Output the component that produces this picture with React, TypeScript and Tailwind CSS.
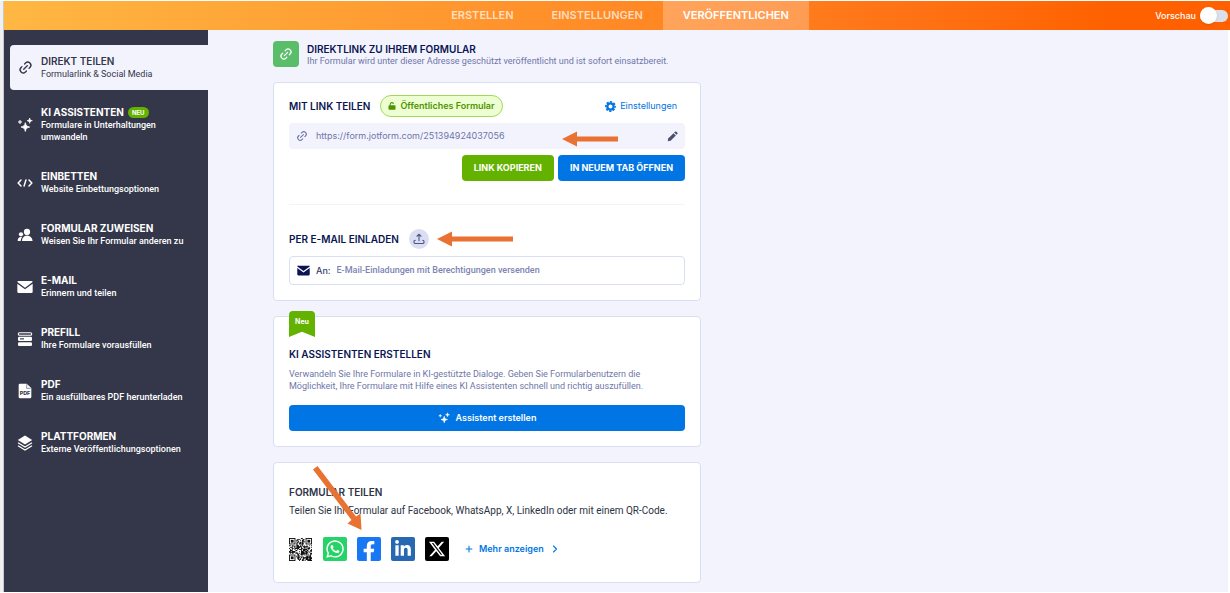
import type { ReactNode } from 'react';
import { Link2, Plus, ChevronRight } from 'lucide-react';
import { FaXTwitter } from 'react-icons/fa6';
import { FaWhatsapp, FaFacebookF, FaLinkedinIn } from 'react-icons/fa';

function LinkIcon({ className }: { className: string }) {
  return <Link2 className={`-rotate-45 ${className}`} strokeWidth={2.2} aria-hidden="true" />;
}

function SparkleIcon({ className }: { className: string }) {
  return (
    <svg viewBox="0 0 24 24" className={className} fill="currentColor" aria-hidden="true">
      <path d="M12.5 8.5c.9 4.3 2.2 5.7 6.5 6.6-4.3.9-5.6 2.2-6.5 6.6-.9-4.4-2.2-5.7-6.5-6.6 4.300-.9 5.600-2.300 6.500-6.600z" stroke="currentColor" strokeWidth="1.200" />
      <path d="M19 1.500c.5 2.700 1.300 3.500 4 4-2.700.5-3.500 1.300-4 4-.5-2.700-1.300-3.500-4-4 2.700-.5 3.500-1.300 4-4z" stroke="currentColor" />
      <path d="M4.500 4.500c.4 2 1 2.600 3 3-2 .4-2.600 1-3 3-.4-2-1-2.600-3-3 2-.4 2.600-1 3-3z" stroke="currentColor" strokeWidth=".8" />
    </svg>
  );
}

function CodeIcon() {
  return (
    <svg viewBox="0 0 24 24" className="size-4" fill="none" stroke="currentColor" strokeWidth="2.2" strokeLinecap="round" strokeLinejoin="round" aria-hidden="true">
      <path d="M6 7.500 1.700 12 6 16.500M18 7.500l4.300 4.500-4.300 4.500M13.400 7.500l-2.800 9" />
    </svg>
  );
}

function PeopleIcon() {
  return (
    <svg viewBox="0 0 24 24" className="size-4" fill="currentColor" aria-hidden="true">
      <circle cx="15" cy="7.500" r="4.700" />
      <path d="M7.500 21c0-5 3-8 7.500-8s8.300 3 8.300 8z" />
      <circle cx="6" cy="11" r="3.200" />
      <path d="M1 21c0-3.600 1.800-6 4.800-6 .7 0 1.300.1 1.900.3C6.300 17 5.700 18.800 5.600 21z" />
    </svg>
  );
}

function EnvelopeIcon({ className }: { className: string }) {
  return (
    <svg viewBox="0 0 24 24" className={className} fill="currentColor" aria-hidden="true">
      <path d="M2.500 3h19A1.800 1.800 0 0 1 23.500 4.600L12 13 .5 4.600A1.800 1.800 0 0 1 2.500 3z" />
      <path d="M.5 7.300 12 15.500l11.500-8.200V19a2 2 0 0 1-2 2h-19a2 2 0 0 1-2-2z" />
    </svg>
  );
}

function PrefillIcon() {
  return (
    <svg viewBox="0 0 24 24" className="size-4" aria-hidden="true">
      <rect x="2" y="2.500" width="20" height="4" rx="1.500" fill="none" stroke="currentColor" strokeWidth="1.600" />
      <rect x="1.500" y="8.500" width="21" height="6.500" rx="1.800" fill="currentColor" />
      <path d="M4.500 11.800h6" stroke="#343749" strokeWidth="1.700" />
      <rect x="1.500" y="17" width="21" height="5.500" rx="1.800" fill="currentColor" />
    </svg>
  );
}

function PdfIcon() {
  return (
    <svg viewBox="0 0 24 24" className="size-4" aria-hidden="true">
      <path d="M4.500 1h10l7 6.500V21a2 2 0 0 1-2 2h-15a2 2 0 0 1-2-2V3a2 2 0 0 1 2-2z" fill="currentColor" />
      <path d="M14.500 2v6h6" fill="none" stroke="#343749" strokeWidth=".8" />
      <text x="12" y="18.500" textAnchor="middle" fontSize="8" fontWeight="800" fill="#343749">PDF</text>
    </svg>
  );
}

function LayersIcon() {
  return (
    <svg viewBox="0 0 24 24" className="size-4" fill="currentColor" aria-hidden="true">
      <path d="M12 .8 22.800 7.500 12 14.200 1.200 7.500z" />
      <path d="m1.500 11.700 10.500 6.400 10.500-6.400M1.500 16.200 12 22.600l10.500-6.400" fill="none" stroke="currentColor" strokeWidth="1.900" />
    </svg>
  );
}

function LockIcon() {
  return (
    <svg viewBox="0 0 16 16" className="size-2" aria-hidden="true">
      <rect x="1" y="6.500" width="14" height="9" rx="1.500" fill="currentColor" />
      <path d="M4.500 7V4.500a3.300 3.300 0 0 1 6.500-.8" fill="none" stroke="currentColor" strokeWidth="2.200" />
    </svg>
  );
}

function GearIcon() {
  return (
    <svg viewBox="0 0 24 24" className="size-[11px]" aria-hidden="true">
      <circle cx="12" cy="12" r="6.900" fill="none" stroke="currentColor" strokeWidth="5" />
      <circle cx="12" cy="12" r="10.200" fill="none" stroke="currentColor" strokeWidth="3.400" strokeDasharray="4.900 3.110" strokeDashoffset="2.450" />
    </svg>
  );
}

function PencilIcon() {
  return (
    <svg viewBox="0 0 24 24" className="size-[11px]" fill="currentColor" aria-hidden="true">
      <path d="M1.500 22.500 3 16 14.300 4.700l5 5L8 21z" />
      <path d="m15.600 3.400 1.700-1.700a2.400 2.400 0 0 1 3.400 0l1.600 1.600a2.400 2.400 0 0 1 0 3.400l-1.700 1.700z" />
    </svg>
  );
}

function UploadIcon() {
  return (
    <svg viewBox="0 0 24 24" className="size-3" fill="none" stroke="currentColor" strokeWidth="2.200" strokeLinecap="round" strokeLinejoin="round" aria-hidden="true">
      <path d="M12 15.500V3M8 6.500 12 2.500l4 4M4.500 14.500C3 14.500 2 15.500 2 17v1.500A2.500 2.500 0 0 0 4.500 21h15a2.500 2.500 0 0 0 2.500-2.500V17c0-1.500-1-2.500-2.500-2.500" />
    </svg>
  );
}

const QR_SIZE = 25;

function qrCells() {
  const cells: string[] = [];
  const inFinder = (x: number, y: number) =>
    (x < 8 && y < 8) || (x > QR_SIZE - 9 && y < 8) || (x < 8 && y > QR_SIZE - 9);
  let seed = 77;
  for (let y = 0; y < QR_SIZE; y++) {
    for (let x = 0; x < QR_SIZE; x++) {
      seed = (seed * 1103515245 + 12345) % 2147483648;
      if (!inFinder(x, y) && (seed >> 12) % 100 < 60) cells.push(`M${x} ${y}h1v1h-1z`);
    }
  }
  return cells.join('');
}

const QR_PATH = qrCells();

function QrIcon() {
  return (
    <svg viewBox="0 0 25 25" className="size-[23px]" aria-hidden="true">
      <path d={QR_PATH} fill="#111" />
      {[[0, 0], [18, 0], [0, 18]].map(([x, y]) => (
        <g key={`${x}-${y}`}>
          <rect x={x + 0.5} y={y + 0.5} width="6" height="6" fill="none" stroke="#111" />
          <rect x={x + 2} y={y + 2} width="3" height="3" fill="#111" />
        </g>
      ))}
    </svg>
  );
}

function LeftArrow({ length, className }: { length: number; className: string }) {
  return (
    <svg viewBox={`0 0 ${length} 16`} width={length} height="16" className={className} fill="#e97132" aria-hidden="true">
      <path d={`M0 8 15 .5v5H${length}v5H15v5z`} />
    </svg>
  );
}

type NavItem = { title: string; text: string; icon: ReactNode; isNew?: boolean };

const navItems: NavItem[] = [
  { title: 'KI ASSISTENTEN', text: 'Formulare in Unterhaltungen umwandeln', icon: <SparkleIcon className="size-4" />, isNew: true },
  { title: 'EINBETTEN', text: 'Website Einbettungsoptionen', icon: <CodeIcon /> },
  { title: 'FORMULAR ZUWEISEN', text: 'Weisen Sie Ihr Formular anderen zu', icon: <PeopleIcon /> },
  { title: 'E-MAIL', text: 'Erinnern und teilen', icon: <EnvelopeIcon className="size-4" /> },
  { title: 'PREFILL', text: 'Ihre Formulare vorausfüllen', icon: <PrefillIcon /> },
  { title: 'PDF', text: 'Ein ausfüllbares PDF herunterladen', icon: <PdfIcon /> },
  { title: 'PLATTFORMEN', text: 'Externe Veröffentlichungsoptionen', icon: <LayersIcon /> },
];

function Header() {
  return (
    <header className="relative flex h-[29px] items-stretch justify-center bg-linear-to-r from-[#ffb743] to-[#ff6100] to-90%">
      <nav className="ml-2 flex text-[11px] font-semibold text-white/70">
        <a href="#erstellen" className="flex items-center px-[18px]">ERSTELLEN</a>
        <a href="#einstellungen" className="flex items-center px-5">EINSTELLUNGEN</a>
        <a href="#veroeffentlichen" aria-current="page" className="flex items-center bg-white/25 px-5 text-white">
          VERÖFFENTLICHEN
        </a>
      </nav>
      <label className="absolute inset-y-0 right-0.5 flex items-center gap-1 text-[9px] font-medium text-white">
        Vorschau
        <span className="relative flex h-[17px] w-7 items-center">
          <input type="checkbox" role="switch" className="h-3 w-7 appearance-none rounded-full bg-[#dcdee9]" />
          <span className="pointer-events-none absolute left-0 size-[17px] rounded-full bg-white shadow-sm" />
        </span>
      </label>
    </header>
  );
}

function Sidebar() {
  return (
    <aside className="w-[204px] shrink-0 bg-[#343749] pt-[15px] text-white">
      <a href="#direkt" aria-current="page" className="ml-1.5 flex h-[45px] items-center gap-2 rounded-l bg-[#f3f3fe] pl-2 text-[#343749]">
        <LinkIcon className="size-[15px] shrink-0" />
        <span className="flex flex-col">
          <span className="text-[10px] leading-[13px] font-semibold">DIREKT TEILEN</span>
          <span className="font-['Roboto',sans-serif] text-[9px] leading-3">Formularlink &amp; Social Media</span>
        </span>
      </a>
      <nav className="mt-4 flex flex-col gap-[27px] pl-[13px]">
        {navItems.map((item) => (
          <a key={item.title} href={`#${item.title.toLowerCase()}`} className="flex items-center gap-2">
            <span className="shrink-0">{item.icon}</span>
            <span className="flex flex-col pr-8">
              <span className="flex items-center gap-1 text-[10px] leading-[13px] font-bold whitespace-nowrap">
                {item.title}
                {item.isNew && (
                  <span className="rounded-full bg-[#64b200] px-1 text-[6px] leading-[11px] font-bold">NEU</span>
                )}
              </span>
              <span className={`font-['Roboto',sans-serif] text-[9px] leading-3 font-medium ${item.isNew ? '' : 'whitespace-nowrap'}`}>{item.text}</span>
            </span>
          </a>
        ))}
      </nav>
    </aside>
  );
}

const card = 'relative rounded-sm border border-[#dadef3] bg-white px-[15px]';
const heading = 'text-[10px] leading-4 font-semibold text-[#0a1551]';

function LinkCard() {
  return (
    <section className={`${card} mt-[15px] pt-3 pb-[15px]`}>
      <div className="flex items-center">
        <h2 className={heading}>MIT LINK TEILEN</h2>
        <span className="ml-2.5 flex h-[22px] items-center gap-1 rounded-full border border-[#a3d95b] bg-[#edffd2] px-[7px] text-[9px] font-semibold text-[#529300]">
          <LockIcon />
          Öffentliches Formular
        </span>
        <a href="#einstellungen" className="mr-2 ml-auto flex items-center gap-1 text-[9px] text-[#0075e3]">
          <GearIcon />
          Einstellungen
        </a>
      </div>
      <div className="relative mt-1.5 flex h-[26px] items-center gap-2 rounded-sm bg-[#f3f3fe] px-[7px]">
        <LinkIcon className="size-3 shrink-0 text-[#6f76a7]" />
        <input aria-label="Formularlink" readOnly value="https://form.jotform.com/251394924037056" className="min-w-0 grow bg-transparent text-[9px] text-[#6f76a7] outline-none" />
        <button type="button" aria-label="Link bearbeiten" className="text-[#4b506d]"><PencilIcon /></button>
        <LeftArrow length={56} className="absolute top-2 left-[273px]" />
      </div>
      <div className="mt-1.5 flex justify-end gap-1 text-[9px] font-bold text-white">
        <button type="button" className="h-[26px] rounded-sm bg-[#64b200] px-3">LINK KOPIEREN</button>
        <button type="button" className="h-[26px] rounded-sm bg-[#0075e3] px-3">IN NEUEM TAB ÖFFNEN</button>
      </div>
      <hr className="mt-[23px] border-[#f3f3f8]" />
      <div className="relative mt-6 flex items-center">
        <h2 className={heading}>PER E-MAIL EINLADEN</h2>
        <button type="button" aria-label="Hochladen" className="ml-2.5 flex size-5 items-center justify-center rounded-full bg-[#dadef3] text-[#4f5484]">
          <UploadIcon />
        </button>
        <LeftArrow length={76} className="absolute top-0.5 left-[148px]" />
      </div>
      <label className="mt-[7px] flex h-[29px] items-center gap-1.5 rounded-sm border border-[#dadef3] px-[7px] text-[9px] font-medium text-[#343c6a]">
        <span className="text-[#0a1551]"><EnvelopeIcon className="size-[13px]" /></span>
        <span>An:</span>
        <input type="email" placeholder="E-Mail-Einladungen mit Berechtigungen versenden" className="min-w-0 grow bg-transparent font-['Roboto',sans-serif] font-medium outline-none placeholder:text-[#7d84b2]" />
      </label>
    </section>
  );
}

function AssistantCard() {
  return (
    <section className={`${card} mt-[15px] pt-[29px] pb-[15px]`}>
      <span className="absolute -top-1.5 left-[15px] h-[26px] w-[26px] rounded-t-sm bg-[#64b200] pt-1 text-center text-[7px] leading-[14px] font-bold text-white [clip-path:polygon(0_0,100%_0,100%_100%,50%_80%,0_100%)]">
        Neu
      </span>
      <h2 className={heading}>KI ASSISTENTEN ERSTELLEN</h2>
      <p className="mt-1.5 font-['Roboto',sans-serif] text-[9px] leading-3 text-[#6f76a7]">
        Verwandeln Sie Ihre Formulare in KI-gestützte Dialoge. Geben Sie Formularbenutzern die Möglichkeit, Ihre Formulare mit Hilfe eines KI Assistenten schnell und richtig auszufüllen.
      </p>
      <button type="button" className="mt-[13px] flex h-[26px] w-full items-center justify-center gap-1.5 rounded-sm bg-[#0075e3] text-[9px] font-semibold text-white">
        <SparkleIcon className="size-3" />
        Assistent erstellen
      </button>
    </section>
  );
}

const tile = 'flex size-6 justify-center rounded-xs text-white';

function ShareCard() {
  return (
    <section className={`${card} mt-[15px] pt-[21px] pb-[21px]`}>
      <h2 className="text-[10px] leading-4 font-semibold text-[#2c3345]">FORMULAR TEILEN</h2>
      <p className="mt-[3px] font-['Roboto',sans-serif] text-[10px] leading-4 text-[#2c3345]">
        Teilen Sie Ihr Formular auf Facebook, WhatsApp, X, LinkedIn oder mit einem QR-Code.
      </p>
      <div className="mt-[18px] flex items-center gap-2.5">
        <button type="button" aria-label="QR-Code" className="flex size-6 items-center"><QrIcon /></button>
        <button type="button" aria-label="WhatsApp" className={`${tile} items-center bg-[#25d366]`}><FaWhatsapp className="size-5" /></button>
        <button type="button" aria-label="Facebook" className={`${tile} items-end bg-[#1877f2]`}><FaFacebookF className="size-5" /></button>
        <button type="button" aria-label="LinkedIn" className={`${tile} items-center bg-[#2867b2]`}><FaLinkedinIn className="size-[18px]" /></button>
        <button type="button" aria-label="X" className={`${tile} items-center bg-black`}><FaXTwitter className="size-[18px]" /></button>
        <button type="button" className="ml-[5px] flex items-center gap-[5px] text-[9px] font-semibold text-[#0075e3]">
          <Plus className="size-2.5" strokeWidth={2.500} aria-hidden="true" />
          Mehr anzeigen
          <ChevronRight className="size-3" strokeWidth={2.200} aria-hidden="true" />
        </button>
      </div>
      <svg viewBox="0 0 50 66" className="absolute top-[3px] left-[39px] h-[66px] w-[50px]" fill="#e97132" aria-hidden="true">
        <path d="M4.500 0 43 50.500 47.500 47.500 48.500 64 34.500 57.500 38.500 54 0 3.500z" />
      </svg>
    </section>
  );
}

export default function App() {
  return (
    <div className="flex min-h-screen bg-white py-px font-['Inter',sans-serif]">
      <div className="w-1 shrink-0 border-r border-[#c8c8cc] bg-[#f0f0f0]" />
      <div className="flex min-w-0 grow flex-col">
        <Header />
        <div className="mr-0.5 flex grow bg-[#f3f3fe]">
          <Sidebar />
          <main className="min-w-0 grow pt-[11px] pr-4 pb-2 pl-[65px]">
            <div className="max-w-[428px]">
              <div className="flex items-center gap-2">
                <span className="flex size-[26px] items-center justify-center rounded-sm bg-[#5abd6a] text-white">
                  <LinkIcon className="size-3.5" />
                </span>
                <div className="pt-0.5">
                  <h1 className="text-[10px] leading-3 font-semibold text-[#0a1551]">DIREKTLINK ZU IHREM FORMULAR</h1>
                  <p className="font-['Roboto',sans-serif] text-[9px] leading-3 text-[#6f76a7]">
                    Ihr Formular wird unter dieser Adresse geschützt veröffentlicht und ist sofort einsatzbereit.
                  </p>
                </div>
              </div>
              <LinkCard />
              <AssistantCard />
              <ShareCard />
            </div>
          </main>
        </div>
      </div>
    </div>
  );
}
